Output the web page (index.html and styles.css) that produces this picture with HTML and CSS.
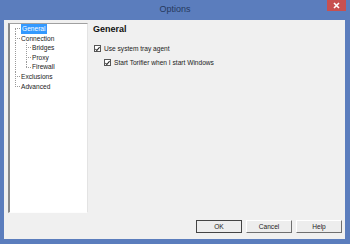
FILE: index.html
```html
<!DOCTYPE html>
<html lang="en">
<head>
  <meta charset="UTF-8">
  <title>Options</title>
  <link rel="stylesheet" href="styles.css">
</head>
<body>
  <div class="window">
    <div class="titlebar">
      <span class="title">Options</span>
      <span class="close">
        <svg width="7" height="7" viewBox="0 0 7 7"><path d="M1 1L6 6M6 1L1 6" stroke="#fff" stroke-width="1.6"/></svg>
      </span>
    </div>
    <div class="client">
      <div class="main">
        <div class="tree">
          <div class="item first"><span class="sel">General</span></div>
          <div class="item">Connection</div>
          <div class="group">
            <div class="item sub first">Bridges</div>
            <div class="item sub">Proxy</div>
            <div class="item sub last">Firewall</div>
          </div>
          <div class="item">Exclusions</div>
          <div class="item last">Advanced</div>
        </div>
        <div class="panel">
          <h1>General</h1>
          <label class="check">
            <span class="box"><svg width="6" height="6" viewBox="0 0 6 6"><path d="M0.5 3L2.2 4.8L5.5 0.8" fill="none" stroke="#222" stroke-width="1.3"/></svg></span>
            Use system tray agent
          </label>
          <label class="check nested">
            <span class="box"><svg width="6" height="6" viewBox="0 0 6 6"><path d="M0.5 3L2.2 4.8L5.5 0.8" fill="none" stroke="#222" stroke-width="1.3"/></svg></span>
            Start Torifier when I start Windows
          </label>
        </div>
      </div>
      <div class="buttons">
        <button class="default">OK</button>
        <button>Cancel</button>
        <button>Help</button>
      </div>
    </div>
  </div>
</body>
</html>
```

FILE: styles.css
```css
body {
  margin: 0;
  font-family: "Liberation Sans", Arial, sans-serif;
}
.window {
  width: 350px;
  height: 244px;
  box-sizing: border-box;
  background-color: #5b7dbd;
  padding: 0 5px 5px 4px;
  display: flex;
  flex-direction: column;
}
.titlebar {
  height: 20px;
  display: flex;
  align-items: flex-start;
}
.title {
  flex: 1;
  text-align: center;
  font-size: 9px;
  line-height: 18px;
  color: #26395e;
  padding-left: 19px;
}
.close {
  width: 19px;
  height: 11px;
  margin-right: -1px;
  background-color: #c75050;
  display: flex;
  align-items: center;
  justify-content: center;
}
.client {
  flex: 1;
  background-color: #f0f0f0;
  padding: 3px 3px 0 4px;
  display: flex;
  flex-direction: column;
}
.main {
  display: flex;
  height: 190px;
}
.tree {
  width: 80px;
  box-sizing: border-box;
  background-color: #fff;
  border-top: 1px solid #a0a0a0;
  border-left: 2px solid #8a8a8a;
  border-right: 1px solid #e3e3e3;
  border-bottom: 1px solid #fdfdfd;
  font-size: 6.6px;
  color: #222;
}
.item {
  height: 9.6px;
  line-height: 9.6px;
  padding-left: 11px;
  white-space: nowrap;
  background:
    repeating-linear-gradient(to bottom, #9a9a9a 0 1px, transparent 1px 2px) 5px 0 / 1px 100% no-repeat,
    repeating-linear-gradient(to right, #9a9a9a 0 1px, transparent 1px 2px) 5px 50% / 5px 1px no-repeat;
}
.item.first {
  background-position: 5px 100%, 5px 50%;
  background-size: 1px 50%, 5px 1px;
}
.item.last {
  background-position: 5px 0, 5px 50%;
  background-size: 1px 50%, 5px 1px;
}
.group {
  background: repeating-linear-gradient(to bottom, #9a9a9a 0 1px, transparent 1px 2px) 5px 0 / 1px 100% no-repeat;
}
.item.sub {
  padding-left: 22px;
  background:
    repeating-linear-gradient(to bottom, #9a9a9a 0 1px, transparent 1px 2px) 16px 0 / 1px 100% no-repeat,
    repeating-linear-gradient(to right, #9a9a9a 0 1px, transparent 1px 2px) 16px 50% / 5px 1px no-repeat;
}
.item.sub.last {
  background-size: 1px 50%, 5px 1px;
}
.sel {
  display: inline-block;
  background-color: #3399ff;
  color: #fff;
  padding: 0 2px 0 1px;
}
.panel {
  flex: 1;
  padding-left: 5px;
}
.panel h1 {
  margin: 1px 0 0 0;
  font-size: 9px;
  line-height: 11px;
  color: #111;
}
.check {
  display: flex;
  align-items: center;
  gap: 3px;
  font-size: 6.6px;
  color: #222;
  margin-top: 10px;
  padding-left: 1px;
}
.check.nested {
  margin-top: 7px;
  padding-left: 11px;
}
.box {
  width: 7px;
  height: 7px;
  box-sizing: border-box;
  border: 1px solid #555;
  background-color: #fff;
  display: flex;
  align-items: center;
  justify-content: center;
}
.box svg {
  display: block;
}
.buttons {
  display: flex;
  justify-content: flex-end;
  gap: 4px;
  margin-top: 7px;
}
.buttons button {
  width: 46px;
  height: 13px;
  padding: 0;
  font-family: "Liberation Sans", Arial, sans-serif;
  font-size: 6.6px;
  color: #222;
  background-color: #ededed;
  border: 1px solid;
  border-color: #fff #6f6f6f #6f6f6f #fff;
}
.buttons button.default {
  border-color: #444;
}
```
